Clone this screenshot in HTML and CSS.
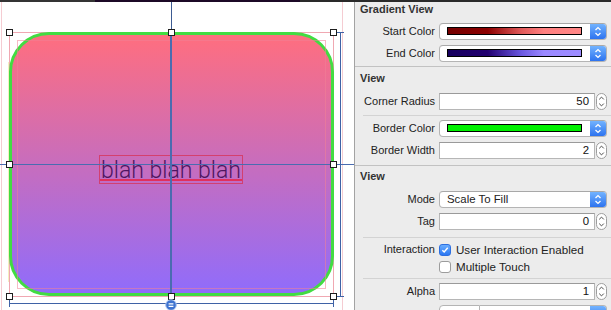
FILE: index.html
```html
<!DOCTYPE html>
<html lang="en">
<head>
    <meta charset="UTF-8">
    <meta name="viewport" content="width=device-width, initial-scale=1.0">
    <title>Gradient View</title>
    <link rel="stylesheet" href="styles.css">
</head>
<body>
    <div class="strip"></div>

    <div class="main">
        <div class="canvas">
            <div class="pale pale-left"></div>
            <div class="pale pale-right"></div>
            <div class="pale-yellow"></div>

            <div class="frame"></div>
            <div class="gradient-view"></div>
            <div class="margins"></div>

            <div class="label-box">blah blah blah<span class="baseline"></span></div>

            <div class="guide guide-v-thin"></div>
            <div class="guide guide-v"></div>
            <div class="guide guide-h"></div>

            <div class="guide dim-right"></div>
            <div class="guide tick-right-top"></div>
            <div class="guide tick-right-bottom"></div>
            <div class="guide dim-bottom"></div>
            <div class="guide tick-bottom-left"></div>
            <div class="guide tick-bottom-right"></div>

            <div class="handle x-l y-t"></div>
            <div class="handle x-c y-t"></div>
            <div class="handle x-r y-t"></div>
            <div class="handle x-l y-m"></div>
            <div class="handle x-r y-m"></div>
            <div class="handle x-l y-b"></div>
            <div class="handle x-c y-b"></div>
            <div class="handle x-r y-b"></div>

            <svg class="equal-badge" width="12" height="12" viewBox="0 0 12 12">
                <circle cx="6" cy="6" r="5.3" fill="#3f74d0" stroke="#a9c2ee" stroke-width="1"/>
                <path d="M3.6 4.8 H8.4 M3.6 7.3 H8.4" stroke="#fff" stroke-width="1.3"/>
            </svg>
        </div>

        <aside class="inspector">
            <section class="group first">
                <h3>Gradient View</h3>
                <div class="row">
                    <label>Start Color</label>
                    <div class="well">
                        <span class="swatch swatch-start"></span>
                        <span class="arrows"><svg width="16" height="15" viewBox="0 0 16 15"><path d="M5.5 6 L8 3.6 L10.5 6 M5.5 9 L8 11.4 L10.5 9" fill="none" stroke="#fff" stroke-width="1.3"/></svg></span>
                    </div>
                </div>
                <div class="row">
                    <label>End Color</label>
                    <div class="well">
                        <span class="swatch swatch-end"></span>
                        <span class="arrows"><svg width="16" height="15" viewBox="0 0 16 15"><path d="M5.5 6 L8 3.6 L10.5 6 M5.5 9 L8 11.4 L10.5 9" fill="none" stroke="#fff" stroke-width="1.3"/></svg></span>
                    </div>
                </div>
            </section>

            <section class="group second">
                <h3>View</h3>
                <div class="row">
                    <label>Corner Radius</label>
                    <div class="field">
                        <span class="input">50</span>
                        <svg class="stepper" width="11" height="17" viewBox="0 0 11 17"><rect x="0.5" y="0.5" width="10" height="16" rx="5" fill="#fff" stroke="#9d9d9d"/><path d="M3.2 6.4 L5.5 4.1 L7.8 6.4 M3.2 10.6 L5.5 12.9 L7.8 10.6" fill="none" stroke="#4a4a4a" stroke-width="1"/></svg>
                    </div>
                </div>
                <div class="sep"></div>
                <div class="row">
                    <label>Border Color</label>
                    <div class="well">
                        <span class="swatch swatch-green"></span>
                        <span class="arrows"><svg width="16" height="15" viewBox="0 0 16 15"><path d="M5.5 6 L8 3.6 L10.5 6 M5.5 9 L8 11.4 L10.5 9" fill="none" stroke="#fff" stroke-width="1.3"/></svg></span>
                    </div>
                </div>
                <div class="row">
                    <label>Border Width</label>
                    <div class="field">
                        <span class="input">2</span>
                        <svg class="stepper" width="11" height="17" viewBox="0 0 11 17"><rect x="0.5" y="0.5" width="10" height="16" rx="5" fill="#fff" stroke="#9d9d9d"/><path d="M3.2 6.4 L5.5 4.1 L7.8 6.4 M3.2 10.6 L5.5 12.9 L7.8 10.6" fill="none" stroke="#4a4a4a" stroke-width="1"/></svg>
                    </div>
                </div>
            </section>

            <section class="group third">
                <h3>View</h3>
                <div class="row">
                    <label>Mode</label>
                    <div class="popup">
                        <span class="popup-text">Scale To Fill</span>
                        <span class="arrows"><svg width="16" height="15" viewBox="0 0 16 15"><path d="M5.5 6 L8 3.6 L10.5 6 M5.5 9 L8 11.4 L10.5 9" fill="none" stroke="#fff" stroke-width="1.3"/></svg></span>
                    </div>
                </div>
                <div class="row">
                    <label>Tag</label>
                    <div class="field">
                        <span class="input">0</span>
                        <svg class="stepper" width="11" height="17" viewBox="0 0 11 17"><rect x="0.5" y="0.5" width="10" height="16" rx="5" fill="#fff" stroke="#9d9d9d"/><path d="M3.2 6.4 L5.5 4.1 L7.8 6.4 M3.2 10.6 L5.5 12.9 L7.8 10.6" fill="none" stroke="#4a4a4a" stroke-width="1"/></svg>
                    </div>
                </div>
                <div class="sep sep-check"></div>
                <div class="row check-row">
                    <label>Interaction</label>
                    <div class="check-item">
                        <span class="box checked"><svg width="12" height="12" viewBox="0 0 12 12"><path d="M2.8 6.2 L5 8.4 L9.3 3.3" fill="none" stroke="#fff" stroke-width="1.7"/></svg></span>
                        <span>User Interaction Enabled</span>
                    </div>
                </div>
                <div class="row check-row">
                    <label></label>
                    <div class="check-item">
                        <span class="box"></span>
                        <span>Multiple Touch</span>
                    </div>
                </div>
                <div class="sep sep-alpha"></div>
                <div class="row">
                    <label>Alpha</label>
                    <div class="field">
                        <span class="input">1</span>
                        <svg class="stepper" width="11" height="17" viewBox="0 0 11 17"><rect x="0.5" y="0.5" width="10" height="16" rx="5" fill="#fff" stroke="#9d9d9d"/><path d="M3.2 6.4 L5.5 4.1 L7.8 6.4 M3.2 10.6 L5.5 12.9 L7.8 10.6" fill="none" stroke="#4a4a4a" stroke-width="1"/></svg>
                    </div>
                </div>
                <div class="row partial">
                    <label></label>
                    <div class="split">
                        <span class="split-left"></span>
                        <span class="split-right"><span class="arrows"></span></span>
                    </div>
                </div>
            </section>
        </aside>
    </div>
</body>
</html>
```

FILE: styles.css
```css
* {
    box-sizing: border-box;
}

body {
    margin: 0;
    width: 611px;
    height: 310px;
    overflow: hidden;
    background-color: #fff;
    font-family: "Liberation Sans", Arial, sans-serif;
}

.strip {
    height: 2px;
    background: linear-gradient(to right, #343434 0 95px, #1c0926 95px 300px, #2a2a2a 300px);
}

.main {
    display: flex;
    height: 308px;
    overflow: hidden;
}

/* ---------- canvas ---------- */

.canvas {
    position: relative;
    width: 354px;
    flex-shrink: 0;
    background-color: #fff;
    overflow: hidden;
}

.pale {
    position: absolute;
    top: 0;
    width: 1px;
    height: 308px;
    background-color: #f5ccd2;
}

.pale-left {
    left: 1px;
}

.pale-right {
    left: 342px;
}

.pale-yellow {
    position: absolute;
    left: 8px;
    top: 60px;
    width: 1px;
    height: 220px;
    background-color: #f4efc0;
}

.frame {
    position: absolute;
    left: 9px;
    top: 30px;
    width: 325px;
    height: 265px;
    border: 1px solid #f0a8b2;
}

.gradient-view {
    position: absolute;
    left: 9px;
    top: 30px;
    width: 325px;
    height: 264px;
    border: 3px solid #42dc42;
    border-radius: 40px;
    background: linear-gradient(#ff6e7f, #906cfb);
}

.margins {
    position: absolute;
    left: 17px;
    top: 38px;
    width: 309px;
    height: 249px;
    border: 1px solid rgba(240, 130, 150, 0.55);
}

.label-box {
    position: absolute;
    left: 99px;
    top: 153px;
    width: 144px;
    height: 29px;
    border: 1px solid rgba(215, 50, 85, 0.75);
    font-family: Roboto, "Liberation Sans", sans-serif;
    font-weight: 300;
    font-size: 23px;
    line-height: 29px;
    text-align: center;
    color: #4e1560;
    white-space: nowrap;
}

.baseline {
    position: absolute;
    left: 0;
    right: 0;
    top: 23px;
    height: 1.5px;
    background-color: #e0305e;
}

.guide {
    position: absolute;
    background-color: #4a6cb0;
}

.guide-v-thin {
    left: 171px;
    top: 0;
    width: 1px;
    height: 30px;
    background-color: #3d5b92;
}

.guide-v {
    left: 170px;
    top: 30px;
    width: 2px;
    height: 268px;
}

.guide-h {
    left: 0;
    top: 162px;
    width: 354px;
    height: 1px;
}

.dim-right {
    left: 340px;
    top: 30px;
    width: 1px;
    height: 264px;
    background-color: #3f62a6;
}

.tick-right-top,
.tick-right-bottom {
    left: 336px;
    width: 8px;
    height: 1px;
    background-color: #3f62a6;
}

.tick-right-top {
    top: 30px;
}

.tick-right-bottom {
    top: 294px;
}

.dim-bottom {
    left: 9px;
    top: 301px;
    width: 325px;
    height: 1px;
    background-color: #3f62a6;
}

.tick-bottom-left,
.tick-bottom-right {
    top: 298px;
    width: 1px;
    height: 7px;
    background-color: #3f62a6;
}

.tick-bottom-left {
    left: 9px;
}

.tick-bottom-right {
    left: 333px;
}

.handle {
    position: absolute;
    width: 7px;
    height: 7px;
    background-color: #fff;
    border: 1px solid #1e1e1e;
}

.x-l { left: 6px; }
.x-c { left: 168px; }
.x-r { left: 330px; }
.y-t { top: 27px; }
.y-m { top: 159px; }
.y-b { top: 291px; }

.equal-badge {
    position: absolute;
    left: 165px;
    top: 297px;
}

/* ---------- inspector ---------- */

.inspector {
    flex: 1;
    background-color: #ececec;
    border-left: 1px solid #a3a3a3;
    font-size: 11px;
    color: #222;
}

.group {
    border-top: 1px solid #c2c2c2;
}

.group.first {
    border-top: none;
    padding-bottom: 4px;
}

.group.second {
    padding-top: 4px;
    padding-bottom: 6px;
}

.group.third {
    padding-top: 3px;
}

.group h3 {
    margin: 0 0 8px 0;
    padding-left: 5px;
    font-size: 11px;
    line-height: 14px;
    font-weight: bold;
    color: #333;
}

.group.first h3 {
    margin-bottom: 7px;
}

.row {
    display: grid;
    grid-template-columns: 80px 168px;
    column-gap: 4px;
    align-items: center;
    height: 17px;
}

.row + .row {
    margin-top: 5px;
}

.check-row + .check-row {
    margin-top: 0;
}

.row label {
    text-align: right;
    white-space: nowrap;
    line-height: 17px;
}

.sep {
    height: 1px;
    margin: 5px 0 4px 8px;
    background-color: #d3d3d3;
}

.sep-check {
    margin-top: 7px;
    margin-bottom: 3px;
}

.sep-alpha {
    margin-top: 3px;
    margin-bottom: 4px;
}

/* colour wells and popups */

.well,
.popup {
    display: flex;
    height: 17px;
    background-color: #fff;
    border: 1px solid #b4b4b4;
    border-top-color: #a8a8a8;
    border-radius: 4px;
    overflow: hidden;
}

.swatch {
    flex: 1;
    height: 8px;
    margin: 3px 8px 0 7px;
    border: 1px solid #000;
}

.swatch-start {
    background: linear-gradient(82deg, #740000 0%, #8c0000 30%, #e05a5a 55%, #ff8080 72%, #ff8686 100%);
}

.swatch-end {
    background: linear-gradient(82deg, #16005e 0%, #220070 30%, #6a58e0 55%, #9a88ff 72%, #9d8cff 100%);
}

.swatch-green {
    background-color: #00f000;
}

.arrows {
    display: flex;
    align-items: center;
    justify-content: center;
    width: 16px;
    flex-shrink: 0;
    background: linear-gradient(#72b3ff, #2d73ef);
}

.popup-text {
    flex: 1;
    padding-left: 7px;
    font-size: 11.4px;
    line-height: 15px;
    color: #222;
}

/* text fields with steppers */

.field {
    display: flex;
    gap: 1px;
    height: 17px;
}

.input {
    flex: 1;
    background-color: #fff;
    border: 1px solid #b6b6b6;
    border-top-color: #9a9a9a;
    padding-right: 5px;
    text-align: right;
    font-size: 11.4px;
    line-height: 15px;
    color: #111;
}

.stepper {
    flex-shrink: 0;
}

/* checkboxes */

.check-item {
    display: flex;
    align-items: center;
    gap: 5px;
    font-size: 11.6px;
    line-height: 17px;
    color: #222;
}

.box {
    width: 12px;
    height: 12px;
    border: 1px solid #9c9c9c;
    border-radius: 3px;
    background-color: #fff;
}

.box.checked {
    display: flex;
    align-items: center;
    justify-content: center;
    border-color: #2d6fe0;
    background: linear-gradient(#6aaeff, #2b77f2);
}

/* partially visible row */

.split {
    display: flex;
    height: 17px;
}

.split-left {
    width: 41px;
    background-color: #fff;
    border: 1px solid #b4b4b4;
    border-radius: 4px 0 0 4px;
}

.split-right {
    flex: 1;
    display: flex;
    justify-content: flex-end;
    background-color: #fff;
    border: 1px solid #b4b4b4;
    border-left: none;
    border-radius: 0 4px 4px 0;
    overflow: hidden;
}
```
